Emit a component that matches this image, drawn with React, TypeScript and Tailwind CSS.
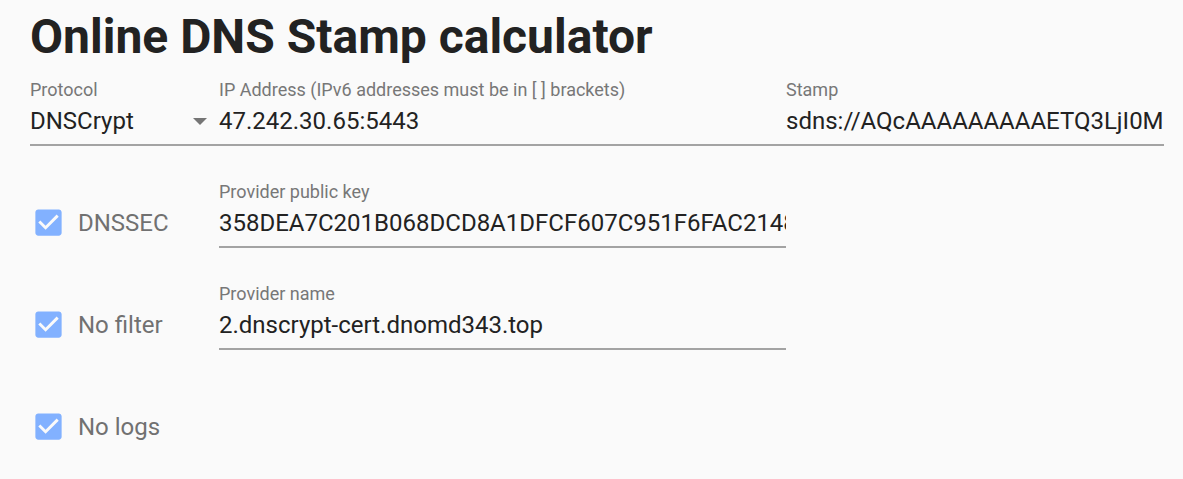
import React from "react";

const font = { fontFamily: "Roboto, 'Noto Sans', sans-serif" };

function CheckIcon() {
  return (
    <svg width="35" height="35" viewBox="0 0 24 24" className="shrink-0">
      <path
        fill="#82b1ff"
        d="M19 3H5c-1.11 0-2 .9-2 2v14c0 1.1.89 2 2 2h14c1.11 0 2-.9 2-2V5c0-1.1-.89-2-2-2zm-9 14l-5-5 1.41-1.41L10 14.17l7.59-7.59L19 8l-9 9z"
      />
    </svg>
  );
}

function Field({
  label,
  value,
  select,
  className,
}: {
  label: string;
  value: string;
  select?: boolean;
  className?: string;
}) {
  return (
    <div className={"min-w-0 " + (className ?? "")}>
      <div className="h-[27px] leading-[27px] text-[18px] text-[#777777] whitespace-nowrap">{label}</div>
      <div className="border-b-2 border-[#a3a3a3] pb-[5px]">
        <div className="flex h-[36px] items-center overflow-hidden">
          <div className="min-w-0 flex-1 overflow-hidden whitespace-nowrap text-[24px] leading-[36px] text-[#222222]">
            {value}
          </div>
          {select && (
            <svg width="14" height="7" viewBox="0 0 14 7" className="mr-[12px] shrink-0">
              <path d="M0 0h14L7 7z" fill="#757575" />
            </svg>
          )}
        </div>
      </div>
    </div>
  );
}

function Check({ label }: { label: string }) {
  return (
    <div className="pt-[27px]">
      <div className="flex h-[36px] items-center">
        <div className="ml-px -mt-px">
          <CheckIcon />
        </div>
        <span className="ml-[12px] text-[24px] leading-[36px] text-[#717171] whitespace-nowrap">{label}</span>
      </div>
    </div>
  );
}

export default function App() {
  return (
    <div className="min-h-[479px] w-full bg-[#fafafa] pl-[30px] pr-[19px]" style={font}>
      <h1 className="pt-[9px] h-[65px] text-[48px] leading-[56px] font-bold text-[#222222] whitespace-nowrap">
        Online DNS Stamp calculator
      </h1>
      <div className="mt-[11px] grid grid-cols-6 gap-y-[32px]">
        <Field className="col-span-1" label="Protocol" value="DNSCrypt" select />
        <Field
          className="col-span-3"
          label="IP Address (IPv6 addresses must be in [ ] brackets)"
          value="47.242.30.65:5443"
        />
        <Field
          className="col-span-2"
          label="Stamp"
          value="sdns://AQcAAAAAAAAAETQ3LjI0Mi4zMC42NTo1NDQzIDWN6nwgGwaNzYoe38_2B8lR9vrCFIDWoe8"
        />

        <Check label="DNSSEC" />
        <Field
          className="col-span-3"
          label="Provider public key"
          value="358DEA7C201B068DCD8A1DFCF607C951F6FAC21480D6A1EF"
        />
        <div className="col-span-2" />

        <Check label="No filter" />
        <Field className="col-span-3" label="Provider name" value="2.dnscrypt-cert.dnomd343.top" />
        <div className="col-span-2" />

        <Check label="No logs" />
      </div>
    </div>
  );
}
